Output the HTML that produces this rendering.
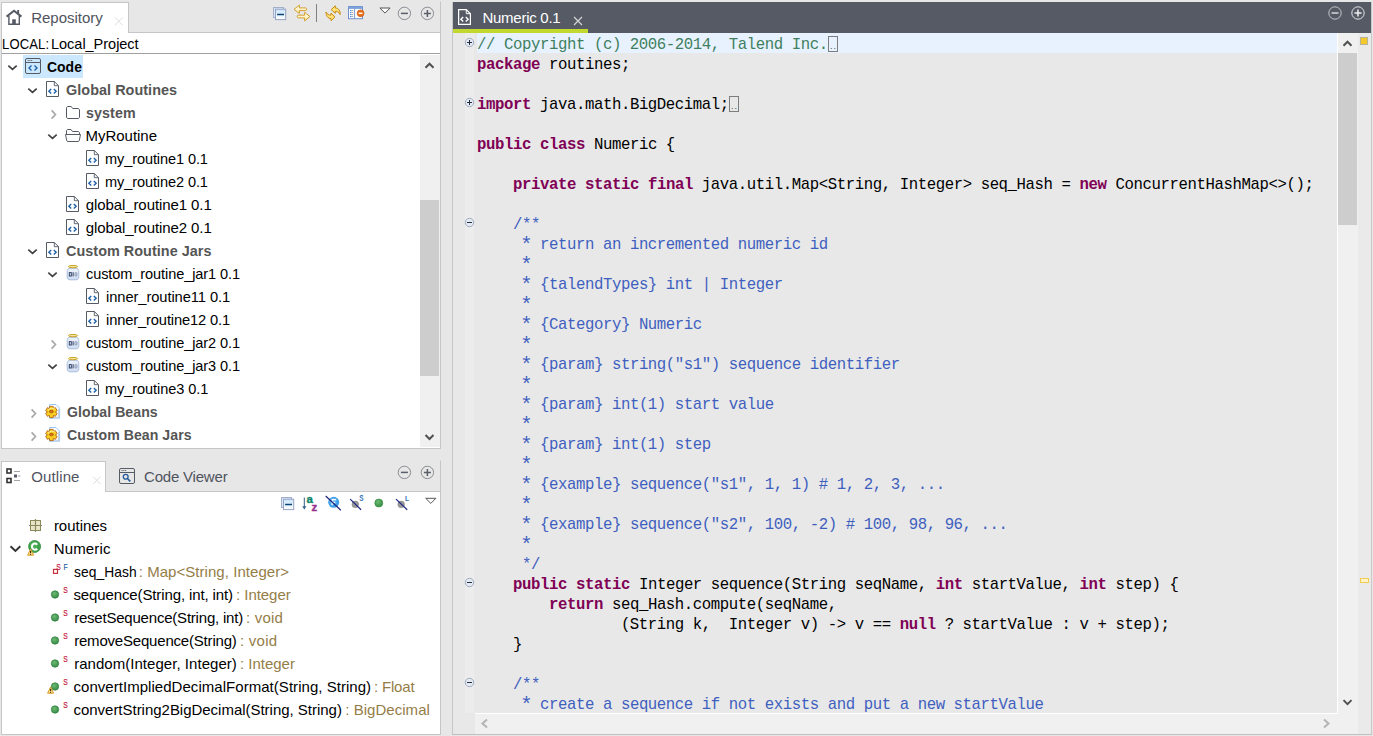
<!DOCTYPE html>
<html lang="en"><head><meta charset="utf-8"><title>Talend Studio - Numeric 0.1</title>
<style>
html,body{margin:0;padding:0}
body{width:1373px;height:736px;background:#e7e7e7;position:relative;overflow:hidden;font-family:"Liberation Sans",sans-serif;font-size:15px;color:#000}
div,span,svg{position:absolute;box-sizing:border-box}
.t{white-space:pre;line-height:23px;height:23px;font-size:15px}
.t span,.c span{position:static}
.b{font-weight:bold}
.g{color:#555}
.tan{color:#957d47}
.c{white-space:pre;font-family:"Liberation Mono",monospace;font-size:15.7px;letter-spacing:-0.4215px;line-height:20px;height:20px;left:478px}
.k{color:#7f0055;font-weight:bold}
.c .as{display:inline-block;width:9px;text-align:center;font-size:20.5px;line-height:10px;letter-spacing:0;vertical-align:-2.4px;text-indent:-1.7px}
.cm{color:#3f7f5f}
.jd{color:#3f5fbf}
</style></head><body>
<!-- Repository view -->
<div style="left:1px;top:1px;width:440px;height:32px;border:1px solid #e3e3e3;border-right-color:#c6c6c6;border-bottom:none;border-top-color:#e7e7e7"></div><div style="left:1px;top:32px;width:440px;height:417px;border:1px solid #c6c6c6;border-top:1px solid #c6c6c6;background:#fff"></div><div style="left:1px;top:2px;width:128px;height:31px;background:#fff;border:1px solid #c6c6c6;border-bottom:none"></div><svg style="left:5px;top:9px" width="18" height="17" viewBox="0 0 18 17"><path d="M1.6 7.6L9 1.8L16.4 7.6" fill="none" stroke="#555a64" stroke-width="2"/><path d="M12.2 1h1.9v4.2l-1.9-1.5Z" fill="#555a64"/><path d="M3.9 7V15.2H14.3V7" fill="none" stroke="#555a64" stroke-width="1.4"/><rect x="7.2" y="10.3" width="3.6" height="4.9" fill="#555a64"/></svg><div class="t" style="left:31.21px;top:6px;letter-spacing:-0.007px;color:#50545e">Repository</div><svg style="left:114px;top:16px" width="11" height="11" viewBox="0 0 11 11"><g transform="translate(0 0.5)"><path d="M1 1L8.6 8.6M8.6 1L1 8.6" stroke="#dedede" stroke-width="1"/></g></svg><svg width="0" height="0" style="left:0;top:0"><defs><linearGradient id="gb" x1="0" y1="0" x2="0" y2="1"><stop offset="0" stop-color="#c9e4fa"/><stop offset="1" stop-color="#ffffff"/></linearGradient><linearGradient id="gy" x1="0" y1="0" x2="0" y2="1"><stop offset="0" stop-color="#fffdf2"/><stop offset="1" stop-color="#ffeaa0"/></linearGradient><radialGradient id="gg" cx="0.4" cy="0.35" r="0.7"><stop offset="0" stop-color="#6cba74"/><stop offset="1" stop-color="#358a44"/></radialGradient><linearGradient id="gj" x1="0" y1="0" x2="0" y2="1"><stop offset="0" stop-color="#eef3fb"/><stop offset="1" stop-color="#cfdcf0"/></linearGradient></defs></svg><svg style="left:273px;top:7px" width="14" height="14" viewBox="0 0 14 14"><rect x="0.5" y="0.5" width="10" height="10" fill="#d7e9fa" stroke="#a3aecb"/><rect x="2.5" y="2.2" width="10.2" height="10.4" fill="url(#gb)" stroke="#98a3c2"/><path d="M4.1 7.5h6.9" stroke="#0b4576" stroke-width="1.5"/></svg><svg style="left:293px;top:4px" width="18" height="18" viewBox="0 0 18 18"><path d="M1 5.3L6.4 1.1V3.9H12.6C13.9 3.9 13.9 6.6 12.6 6.6H6.4V9.5Z" fill="url(#gy)" stroke="#cf9420" stroke-width="0.9" stroke-linejoin="round"/><path d="M17 12.6L11.6 8.3V11.2H5.2C3.9 11.2 3.9 13.9 5.2 13.9H11.6V16.9Z" fill="url(#gy)" stroke="#cf9420" stroke-width="0.9" stroke-linejoin="round"/></svg><div style="left:316px;top:4px;width:1px;height:18px;background:#808080"></div><svg style="left:325px;top:4px" width="17" height="18" viewBox="0 0 17 18"><path d="M6.2 5.6L10.3 1.8V4C13.5 4 15.3 6.5 15.2 10.6C14 8.3 12.5 7.3 10.3 7.3V9.3Z" fill="#ffe27a" stroke="#c98a10" stroke-width="1" stroke-linejoin="round"/><path d="M10 12.9L6 16.7V14.5C2.8 14.5 1 12 1 8C2.2 10.2 3.8 11.2 6 11.2V9.1Z" fill="#ffe27a" stroke="#c98a10" stroke-width="1" stroke-linejoin="round"/></svg><svg style="left:348px;top:6px" width="17" height="14" viewBox="0 0 17 14"><rect x="0.5" y="0.7" width="14" height="12" fill="#fdfeff" stroke="#6d90cf"/><rect x="0.5" y="0.7" width="14" height="1.8" fill="#7aa2de" stroke="#6d90cf" stroke-width="0.6"/><path d="M6.6 2.5V12.7" stroke="#6d90cf" stroke-width="0.9"/><path d="M2 4.6h1.4M2 6.6h1.4M2 8.6h1.4M2 10.6h1.4" stroke="#2e7be0" stroke-width="1"/><path d="M3.6 4.6h1.6M3.6 6.6h1.6M3.6 8.6h1.6M3.6 10.6h1.6" stroke="#9a9a9a" stroke-width="0.9"/><circle cx="12.6" cy="7.3" r="3.4" fill="#e86f1a" stroke="#c9570a" stroke-width="0.7"/><path d="M10.7 7.3h3.8" stroke="#fff" stroke-width="1.4"/></svg><svg style="left:379px;top:7px" width="13" height="8" viewBox="0 0 13 8"><g transform="translate(0 0.2)"><path d="M0.9 0.8H11.1L6 5.9Z" fill="#fff" stroke="#555" stroke-width="1"/></g></svg><svg style="left:396px;top:5px" width="16" height="16" viewBox="0 0 16 16"><g transform="translate(0.9 0.9)"><circle cx="7.5" cy="7.5" r="6.2" fill="none" stroke="#8b8d93" stroke-width="1"/><path d="M4 7.5h7" stroke="#5a5e68" stroke-width="1.5"/></g></svg><svg style="left:419px;top:5px" width="16" height="16" viewBox="0 0 16 16"><g transform="translate(0.9 0.9)"><circle cx="7.5" cy="7.5" r="6.2" fill="none" stroke="#8b8d93" stroke-width="1"/><path d="M4 7.5h7M7.5 4v7" stroke="#5a5e68" stroke-width="1.5"/></g></svg><div class="t" style="left:1.85px;top:32px;letter-spacing:0.145px;transform:scaleX(0.87);transform-origin:0 0;">LOCAL: </div><div class="t" style="left:51.49px;top:32px;letter-spacing:-0.044px;transform:scaleX(0.97);transform-origin:0 0;">Local_Project</div><div style="left:2px;top:53px;width:438px;height:1px;background:#a0a0a0"></div><div style="left:23px;top:55px;width:60px;height:23px;background:#cce8ff"></div><svg style="left:7px;top:64px" width="12" height="8" viewBox="0 0 12 8"><g transform="translate(0 0.5)"><path d="M1.3 1.2 L5.5 4.8 L9.7 1.2" fill="none" stroke="#404040" stroke-width="1.7"/></g></svg><svg style="left:25px;top:58px" width="16" height="16" viewBox="0 0 16 16"><rect x="0.5" y="0.5" width="15" height="15" rx="1.5" fill="none" stroke="#555a64"/><path d="M0.5 4.5H15.5" stroke="#555a64"/><path d="M2.6 2.5h4.6" stroke="#555a64" stroke-width="0.9" stroke-dasharray="1.1 0.65"/><path d="M6.5 7.5L4 10L6.5 12.5M9.5 7.5L12 10L9.5 12.5" fill="none" stroke="#1f62a8" stroke-width="1.4"/></svg><div class="t b" style="left:46.58px;top:55px;letter-spacing:0.013px;transform:scaleX(0.93);transform-origin:0 0;">Code</div>
<svg style="left:27px;top:87px" width="12" height="8" viewBox="0 0 12 8"><g transform="translate(0 0.5)"><path d="M1.3 1.2 L5.5 4.8 L9.7 1.2" fill="none" stroke="#404040" stroke-width="1.7"/></g></svg><svg style="left:46px;top:81px" width="13" height="16" viewBox="0 0 13 16"><path d="M0.5 0.5H8.3L12.5 4.7V15.5H0.5Z" fill="#fff" stroke="#555a64"/><path d="M8.3 0.5V4.7H12.5" fill="none" stroke="#555a64" stroke-width="0.9"/><path d="M5.2 8L2.9 10.2L5.2 12.4M7.8 8L10.1 10.2L7.8 12.4" fill="none" stroke="#1f62a8" stroke-width="1.45"/></svg><div class="t b g" style="left:65.90px;top:78px;letter-spacing:0.050px;transform:scaleX(0.96);transform-origin:0 0;">Global Routines</div>
<svg style="left:50px;top:109px" width="8" height="12" viewBox="0 0 8 12"><g transform="translate(0.5 0)"><path d="M1.1 1.4 L5 5.5 L1.1 9.6" fill="none" stroke="#a6a6a6" stroke-width="1.6"/></g></svg><svg style="left:66px;top:106px" width="14" height="13" viewBox="0 0 14 13"><path d="M0.5 2C0.5 1.2 1.2 0.5 2 0.5H5.2L6.7 2.5H12C12.8 2.5 13.5 3.2 13.5 4V11C13.5 11.8 12.8 12.5 12 12.5H2C1.2 12.5 0.5 11.8 0.5 11Z" fill="#fff" stroke="#555a64"/></svg><div class="t b g" style="left:86.02px;top:101px;letter-spacing:0.106px;transform:scaleX(0.95);transform-origin:0 0;">system</div>
<svg style="left:47px;top:133px" width="12" height="8" viewBox="0 0 12 8"><g transform="translate(0 0.5)"><path d="M1.3 1.2 L5.5 4.8 L9.7 1.2" fill="none" stroke="#404040" stroke-width="1.7"/></g></svg><svg style="left:65px;top:129px" width="16" height="13" viewBox="0 0 16 13"><path d="M1.5 5.5V2C1.5 1.2 2.2 0.5 3 0.5H6L7.5 2.5H13C13.8 2.5 14.5 3.2 14.5 4V5.5" fill="#fff" stroke="#555a64"/><path d="M0.5 5.5H15.5L14.3 11.5C14.2 12.1 13.7 12.5 13 12.5H3C2.3 12.5 1.8 12.1 1.7 11.5Z" fill="#fff" stroke="#555a64"/></svg><div class="t" style="left:85.57px;top:124px;letter-spacing:-0.034px;">MyRoutine</div>
<svg style="left:86px;top:150px" width="13" height="16" viewBox="0 0 13 16"><path d="M0.5 0.5H8.3L12.5 4.7V15.5H0.5Z" fill="#fff" stroke="#555a64"/><path d="M8.3 0.5V4.7H12.5" fill="none" stroke="#555a64" stroke-width="0.9"/><path d="M5.2 8L2.9 10.2L5.2 12.4M7.8 8L10.1 10.2L7.8 12.4" fill="none" stroke="#1f62a8" stroke-width="1.45"/></svg><div class="t" style="left:105.42px;top:147px;letter-spacing:-0.104px;transform:scaleX(0.97);transform-origin:0 0;">my_routine1 0.1</div>
<svg style="left:86px;top:173px" width="13" height="16" viewBox="0 0 13 16"><path d="M0.5 0.5H8.3L12.5 4.7V15.5H0.5Z" fill="#fff" stroke="#555a64"/><path d="M8.3 0.5V4.7H12.5" fill="none" stroke="#555a64" stroke-width="0.9"/><path d="M5.2 8L2.9 10.2L5.2 12.4M7.8 8L10.1 10.2L7.8 12.4" fill="none" stroke="#1f62a8" stroke-width="1.45"/></svg><div class="t" style="left:105.42px;top:170px;letter-spacing:-0.104px;transform:scaleX(0.97);transform-origin:0 0;">my_routine2 0.1</div>
<svg style="left:66px;top:196px" width="13" height="16" viewBox="0 0 13 16"><path d="M0.5 0.5H8.3L12.5 4.7V15.5H0.5Z" fill="#fff" stroke="#555a64"/><path d="M8.3 0.5V4.7H12.5" fill="none" stroke="#555a64" stroke-width="0.9"/><path d="M5.2 8L2.9 10.2L5.2 12.4M7.8 8L10.1 10.2L7.8 12.4" fill="none" stroke="#1f62a8" stroke-width="1.45"/></svg><div class="t" style="left:85.69px;top:193px;letter-spacing:-0.086px;">global_routine1 0.1</div>
<svg style="left:66px;top:219px" width="13" height="16" viewBox="0 0 13 16"><path d="M0.5 0.5H8.3L12.5 4.7V15.5H0.5Z" fill="#fff" stroke="#555a64"/><path d="M8.3 0.5V4.7H12.5" fill="none" stroke="#555a64" stroke-width="0.9"/><path d="M5.2 8L2.9 10.2L5.2 12.4M7.8 8L10.1 10.2L7.8 12.4" fill="none" stroke="#1f62a8" stroke-width="1.45"/></svg><div class="t" style="left:85.69px;top:216px;letter-spacing:-0.086px;">global_routine2 0.1</div>
<svg style="left:27px;top:248px" width="12" height="8" viewBox="0 0 12 8"><g transform="translate(0 0.5)"><path d="M1.3 1.2 L5.5 4.8 L9.7 1.2" fill="none" stroke="#404040" stroke-width="1.7"/></g></svg><svg style="left:46px;top:242px" width="13" height="16" viewBox="0 0 13 16"><path d="M0.5 0.5H8.3L12.5 4.7V15.5H0.5Z" fill="#fff" stroke="#555a64"/><path d="M8.3 0.5V4.7H12.5" fill="none" stroke="#555a64" stroke-width="0.9"/><path d="M5.2 8L2.9 10.2L5.2 12.4M7.8 8L10.1 10.2L7.8 12.4" fill="none" stroke="#1f62a8" stroke-width="1.45"/></svg><div class="t b g" style="left:65.76px;top:239px;letter-spacing:0.036px;transform:scaleX(0.96);transform-origin:0 0;">Custom Routine Jars</div>
<svg style="left:47px;top:271px" width="12" height="8" viewBox="0 0 12 8"><g transform="translate(0 0.5)"><path d="M1.3 1.2 L5.5 4.8 L9.7 1.2" fill="none" stroke="#404040" stroke-width="1.7"/></g></svg><svg style="left:66px;top:264px" width="14" height="17" viewBox="0 0 14 17"><path d="M3 4.3C1.6 5.2 1.2 6.3 1.2 7.6V13C1.2 14.8 2.4 15.8 4 15.8H10C11.6 15.8 12.8 14.8 12.8 13V7.6C12.8 6.3 12.4 5.2 11 4.3Z" fill="url(#gj)" stroke="#a3b8da" stroke-width="0.9"/><ellipse cx="7" cy="2.6" rx="4.6" ry="1.15" fill="#f7eaa6" stroke="#c9a227" stroke-width="1"/><rect x="3.3" y="8.6" width="2" height="3.4" fill="none" stroke="#2f3f66" stroke-width="0.95"/><path d="M7.1 8.2v4.2" stroke="#2f3f66" stroke-width="1"/><rect x="9" y="8.6" width="1.9" height="3.4" rx="0.8" fill="none" stroke="#7d8aa8" stroke-width="0.9"/></svg><div class="t" style="left:85.54px;top:262px;letter-spacing:-0.096px;transform:scaleX(0.97);transform-origin:0 0;">custom_routine_jar1 0.1</div>
<svg style="left:86px;top:288px" width="13" height="16" viewBox="0 0 13 16"><path d="M0.5 0.5H8.3L12.5 4.7V15.5H0.5Z" fill="#fff" stroke="#555a64"/><path d="M8.3 0.5V4.7H12.5" fill="none" stroke="#555a64" stroke-width="0.9"/><path d="M5.2 8L2.9 10.2L5.2 12.4M7.8 8L10.1 10.2L7.8 12.4" fill="none" stroke="#1f62a8" stroke-width="1.45"/></svg><div class="t" style="left:105.56px;top:285px;letter-spacing:-0.078px;transform:scaleX(0.98);transform-origin:0 0;">inner_routine11 0.1</div>
<svg style="left:86px;top:311px" width="13" height="16" viewBox="0 0 13 16"><path d="M0.5 0.5H8.3L12.5 4.7V15.5H0.5Z" fill="#fff" stroke="#555a64"/><path d="M8.3 0.5V4.7H12.5" fill="none" stroke="#555a64" stroke-width="0.9"/><path d="M5.2 8L2.9 10.2L5.2 12.4M7.8 8L10.1 10.2L7.8 12.4" fill="none" stroke="#1f62a8" stroke-width="1.45"/></svg><div class="t" style="left:105.56px;top:308px;letter-spacing:-0.138px;transform:scaleX(0.98);transform-origin:0 0;">inner_routine12 0.1</div>
<svg style="left:50px;top:339px" width="8" height="12" viewBox="0 0 8 12"><g transform="translate(0.5 0)"><path d="M1.1 1.4 L5 5.5 L1.1 9.6" fill="none" stroke="#a6a6a6" stroke-width="1.6"/></g></svg><svg style="left:66px;top:333px" width="14" height="17" viewBox="0 0 14 17"><path d="M3 4.3C1.6 5.2 1.2 6.3 1.2 7.6V13C1.2 14.8 2.4 15.8 4 15.8H10C11.6 15.8 12.8 14.8 12.8 13V7.6C12.8 6.3 12.4 5.2 11 4.3Z" fill="url(#gj)" stroke="#a3b8da" stroke-width="0.9"/><ellipse cx="7" cy="2.6" rx="4.6" ry="1.15" fill="#f7eaa6" stroke="#c9a227" stroke-width="1"/><rect x="3.3" y="8.6" width="2" height="3.4" fill="none" stroke="#2f3f66" stroke-width="0.95"/><path d="M7.1 8.2v4.2" stroke="#2f3f66" stroke-width="1"/><rect x="9" y="8.6" width="1.9" height="3.4" rx="0.8" fill="none" stroke="#7d8aa8" stroke-width="0.9"/></svg><div class="t" style="left:85.54px;top:331px;letter-spacing:-0.096px;transform:scaleX(0.97);transform-origin:0 0;">custom_routine_jar2 0.1</div>
<svg style="left:47px;top:363px" width="12" height="8" viewBox="0 0 12 8"><g transform="translate(0 0.5)"><path d="M1.3 1.2 L5.5 4.8 L9.7 1.2" fill="none" stroke="#404040" stroke-width="1.7"/></g></svg><svg style="left:66px;top:356px" width="14" height="17" viewBox="0 0 14 17"><path d="M3 4.3C1.6 5.2 1.2 6.3 1.2 7.6V13C1.2 14.8 2.4 15.8 4 15.8H10C11.6 15.8 12.8 14.8 12.8 13V7.6C12.8 6.3 12.4 5.2 11 4.3Z" fill="url(#gj)" stroke="#a3b8da" stroke-width="0.9"/><ellipse cx="7" cy="2.6" rx="4.6" ry="1.15" fill="#f7eaa6" stroke="#c9a227" stroke-width="1"/><rect x="3.3" y="8.6" width="2" height="3.4" fill="none" stroke="#2f3f66" stroke-width="0.95"/><path d="M7.1 8.2v4.2" stroke="#2f3f66" stroke-width="1"/><rect x="9" y="8.6" width="1.9" height="3.4" rx="0.8" fill="none" stroke="#7d8aa8" stroke-width="0.9"/></svg><div class="t" style="left:85.54px;top:354px;letter-spacing:-0.096px;transform:scaleX(0.97);transform-origin:0 0;">custom_routine_jar3 0.1</div>
<svg style="left:86px;top:380px" width="13" height="16" viewBox="0 0 13 16"><path d="M0.5 0.5H8.3L12.5 4.7V15.5H0.5Z" fill="#fff" stroke="#555a64"/><path d="M8.3 0.5V4.7H12.5" fill="none" stroke="#555a64" stroke-width="0.9"/><path d="M5.2 8L2.9 10.2L5.2 12.4M7.8 8L10.1 10.2L7.8 12.4" fill="none" stroke="#1f62a8" stroke-width="1.45"/></svg><div class="t" style="left:105.42px;top:377px;letter-spacing:-0.075px;transform:scaleX(0.97);transform-origin:0 0;">my_routine3 0.1</div>
<svg style="left:30px;top:408px" width="8" height="12" viewBox="0 0 8 12"><g transform="translate(0.5 0)"><path d="M1.1 1.4 L5 5.5 L1.1 9.6" fill="none" stroke="#a6a6a6" stroke-width="1.6"/></g></svg><svg style="left:45px;top:403px" width="16" height="17" viewBox="0 0 16 17"><path d="M4.6 1.5H11L14.6 5.1V15.2H4.6Z" fill="#fdfeff" stroke="#8ec3f7" stroke-width="0.9"/><path d="M13.6 6V14.3H8" fill="none" stroke="#c9cdd4" stroke-width="1"/><path d="M4.48 5.49 L4.66 3.36 L8.14 3.36 L8.32 5.49 L8.48 5.58 L10.41 4.67 L12.15 7.69 L10.40 8.91 L10.40 9.09 L12.15 10.31 L10.41 13.33 L8.48 12.42 L8.32 12.51 L8.14 14.64 L4.66 14.64 L4.48 12.51 L4.32 12.42 L2.39 13.33 L0.65 10.31 L2.40 9.09 L2.40 8.91 L0.65 7.69 L2.39 4.67 L4.32 5.58Z" fill="#f9cf1f" stroke="#b5651a" stroke-width="0.9" stroke-linejoin="round"/><path d="M3.2 7.2C4.5 5.2 7.5 4.6 9.6 6" fill="none" stroke="#fff3a0" stroke-width="1.1" opacity="0.9"/><ellipse cx="6.4" cy="8.6" rx="2" ry="1.25" fill="#d8731a" stroke="#a04a08" stroke-width="0.7"/></svg><div class="t b g" style="left:66.57px;top:400px;letter-spacing:0.053px;transform:scaleX(0.94);transform-origin:0 0;">Global Beans</div>
<svg style="left:30px;top:431px" width="8" height="12" viewBox="0 0 8 12"><g transform="translate(0.5 0)"><path d="M1.1 1.4 L5 5.5 L1.1 9.6" fill="none" stroke="#a6a6a6" stroke-width="1.6"/></g></svg><svg style="left:45px;top:426px" width="16" height="17" viewBox="0 0 16 17"><path d="M4.6 1.5H11L14.6 5.1V15.2H4.6Z" fill="#fdfeff" stroke="#8ec3f7" stroke-width="0.9"/><path d="M13.6 6V14.3H8" fill="none" stroke="#c9cdd4" stroke-width="1"/><path d="M4.48 5.49 L4.66 3.36 L8.14 3.36 L8.32 5.49 L8.48 5.58 L10.41 4.67 L12.15 7.69 L10.40 8.91 L10.40 9.09 L12.15 10.31 L10.41 13.33 L8.48 12.42 L8.32 12.51 L8.14 14.64 L4.66 14.64 L4.48 12.51 L4.32 12.42 L2.39 13.33 L0.65 10.31 L2.40 9.09 L2.40 8.91 L0.65 7.69 L2.39 4.67 L4.32 5.58Z" fill="#f9cf1f" stroke="#b5651a" stroke-width="0.9" stroke-linejoin="round"/><path d="M3.2 7.2C4.5 5.2 7.5 4.6 9.6 6" fill="none" stroke="#fff3a0" stroke-width="1.1" opacity="0.9"/><ellipse cx="6.4" cy="8.6" rx="2" ry="1.25" fill="#d8731a" stroke="#a04a08" stroke-width="0.7"/></svg><div class="t b g" style="left:66.57px;top:423px;letter-spacing:0.051px;transform:scaleX(0.94);transform-origin:0 0;">Custom Bean Jars</div>
<div style="left:420px;top:55px;width:20px;height:392px;background:#f0f0f0"></div><div style="left:420px;top:200px;width:19px;height:176px;background:#cdcdcd"></div><svg style="left:424px;top:61px" width="12" height="9" viewBox="0 0 12 9"><g transform="translate(0 0.5)"><path d="M1.5 6.2L5.5 2.2L9.5 6.2" fill="none" stroke="#505050" stroke-width="2"/></g></svg><svg style="left:424px;top:433px" width="12" height="9" viewBox="0 0 12 9"><g transform="translate(0 0.2)"><path d="M1.5 1.8L5.5 5.8L9.5 1.8" fill="none" stroke="#505050" stroke-width="2"/></g></svg>
<!-- Outline view -->
<div style="left:1px;top:460px;width:440px;height:32px;border:1px solid #e3e3e3;border-right-color:#c6c6c6;border-bottom:none;border-top-color:#e7e7e7"></div><div style="left:1px;top:491px;width:440px;height:244px;border:1px solid #c6c6c6;border-top:1px solid #c6c6c6;background:#fff"></div><div style="left:1px;top:461px;width:105px;height:31px;background:#fff;border:1px solid #c6c6c6;border-bottom:none"></div><svg style="left:6px;top:468px" width="16" height="16" viewBox="0 0 16 16"><rect x="1" y="1" width="4" height="4" fill="#fff" stroke="#333" stroke-width="1.6"/><rect x="1" y="10.5" width="4" height="4" fill="#fff" stroke="#333" stroke-width="1.6"/><rect x="8" y="6.5" width="3" height="3" fill="#555a64"/><path d="M8 3.5h6M12 8h2.5M8 12.5h6" stroke="#9a9ca2" stroke-width="0.9"/></svg><div class="t" style="left:31.32px;top:465px;letter-spacing:0.103px;color:#50545e">Outline</div><svg style="left:92px;top:475px" width="11" height="11" viewBox="0 0 11 11"><g transform="translate(0 0.5)"><path d="M1 1L8.6 8.6M8.6 1L1 8.6" stroke="#dedede" stroke-width="1"/></g></svg><svg style="left:119px;top:468px" width="16" height="16" viewBox="0 0 16 16"><rect x="0.5" y="0.5" width="15" height="15" rx="1.5" fill="none" stroke="#555a64"/><path d="M0.5 4.5H15.5" stroke="#555a64"/><path d="M2.6 2.5h4.6" stroke="#555a64" stroke-width="0.9" stroke-dasharray="1.1 0.65"/><circle cx="6.7" cy="8.8" r="2.4" fill="none" stroke="#245a9c" stroke-width="1.3"/><path d="M8.6 10.7L11.3 13.4" stroke="#245a9c" stroke-width="1.6"/></svg><div class="t" style="left:144.03px;top:465px;letter-spacing:-0.200px;color:#50545e">Code Viewer</div><svg style="left:396px;top:464px" width="16" height="16" viewBox="0 0 16 16"><g transform="translate(0.9 0.9)"><circle cx="7.5" cy="7.5" r="6.2" fill="none" stroke="#8b8d93" stroke-width="1"/><path d="M4 7.5h7" stroke="#5a5e68" stroke-width="1.5"/></g></svg><svg style="left:419px;top:464px" width="16" height="16" viewBox="0 0 16 16"><g transform="translate(0.9 0.9)"><circle cx="7.5" cy="7.5" r="6.2" fill="none" stroke="#8b8d93" stroke-width="1"/><path d="M4 7.5h7M7.5 4v7" stroke="#5a5e68" stroke-width="1.5"/></g></svg><svg style="left:281px;top:497px" width="14" height="14" viewBox="0 0 14 14"><rect x="0.5" y="0.5" width="10" height="10" fill="#d7e9fa" stroke="#a3aecb"/><rect x="2.5" y="2.2" width="10.2" height="10.4" fill="url(#gb)" stroke="#98a3c2"/><path d="M4.1 7.5h6.9" stroke="#0b4576" stroke-width="1.5"/></svg><svg style="left:301px;top:494px" width="19" height="19" viewBox="0 0 19 19"><path d="M3.3 3.5V14" stroke="#2f5f8a" stroke-width="1"/><path d="M1.3 12.2L3.3 15.6L5.3 12.2Z" fill="#2f5f8a"/><text x="5.4" y="8.9" font-family="Liberation Sans,sans-serif" font-weight="bold" font-size="11.5" fill="#0d8468" stroke="#0d8468" stroke-width="0.35">a</text><text x="10.6" y="16.9" font-family="Liberation Sans,sans-serif" font-weight="bold" font-size="11.5" fill="#96308f" stroke="#96308f" stroke-width="0.35">z</text></svg><svg style="left:324px;top:494px" width="19" height="19" viewBox="0 0 19 19"><circle cx="9.7" cy="8.3" r="5.5" fill="#3f9fe6"/><circle cx="9" cy="7.4" r="3.6" fill="#5fb2f0"/><path d="M8 5.6h4.2M8.2 5.6v5.6M8.2 8.3h3" stroke="#fff" stroke-width="1.3" fill="none"/><path d="M1.7 2L16.8 16.3" stroke="#1a237e" stroke-width="1.2"/></svg><svg style="left:349px;top:494px" width="16" height="17" viewBox="0 0 16 17"><circle cx="6.3" cy="10.4" r="3.3" fill="#9a9a9a" stroke="#858585" stroke-width="0.6"/><path d="M1.2 5.1L12 15.7" stroke="#1a237e" stroke-width="1.2"/><text transform="translate(10.2 7.4) scale(0.78 1)" font-family="Liberation Sans,sans-serif" font-weight="bold" font-size="8.2" fill="#2f6fb5">S</text></svg><svg style="left:374px;top:498px" width="10" height="10" viewBox="0 0 10 10"><circle cx="4.8" cy="5" r="4" fill="url(#gg)" stroke="#3b8c3f" stroke-width="0.7"/></svg><svg style="left:395px;top:494px" width="16" height="17" viewBox="0 0 16 17"><circle cx="6.2" cy="10.4" r="3.3" fill="#9a9a9a" stroke="#858585" stroke-width="0.6"/><path d="M1 5.1L12.2 15.7" stroke="#1a237e" stroke-width="1.2"/><text transform="translate(10 7.4) scale(0.85 1)" font-family="Liberation Sans,sans-serif" font-weight="bold" font-size="8" fill="#2f6fb5">L</text></svg><svg style="left:424px;top:497px" width="13" height="8" viewBox="0 0 13 8"><g transform="translate(0.8 0.5)"><path d="M0.9 0.8H11.1L6 5.9Z" fill="#fff" stroke="#555" stroke-width="1"/></g></svg><svg style="left:29px;top:519px" width="13" height="13" viewBox="0 0 13 13"><rect x="1.5" y="1.5" width="10" height="10" fill="#e8e4c8" stroke="#8b8a5c"/><path d="M6.5 0V13M0 6.5H13" stroke="#8b8a5c" stroke-width="1.2"/></svg><div class="t blk" style="left:53.90px;top:514px;letter-spacing:-0.024px;">routines</div>
<svg style="left:8px;top:544px" width="14" height="10" viewBox="0 0 14 10"><g transform="translate(0.9 0.7)"><path d="M1.6 1.6 L6.5 6.3 L11.4 1.6" fill="none" stroke="#333" stroke-width="1.9"/></g></svg><svg style="left:26px;top:540px" width="17" height="16" viewBox="0 0 17 16"><circle cx="8.6" cy="6.5" r="6" fill="#3fa24c" stroke="#2f8a3c" stroke-width="0.8"/><circle cx="7.8" cy="5.4" r="3.8" fill="#56b463" opacity="0.6"/><path d="M11.3 4.6C9 2.4 5.9 3.9 5.9 6.6C5.9 9.3 9 10.8 11.3 8.7" fill="none" stroke="#fff" stroke-width="2"/></svg><svg style="left:27px;top:548px" width="8" height="9" viewBox="0 0 8 9"><path d="M3.6 1L6.6 7.2H0.6Z" fill="#fde08a" stroke="#d89a2a" stroke-width="1" stroke-linejoin="round"/><path d="M3.6 2.9v2.4M3.6 6v0.8" stroke="#2a1c00" stroke-width="1"/></svg><div class="t blk" style="left:53.72px;top:537px;letter-spacing:0.137px;">Numeric</div>
<svg style="left:52px;top:568px" width="7" height="7" viewBox="0 0 7 7"><g transform="translate(0.7 0.6)"><rect x="0.8" y="0.8" width="4" height="4" fill="#fff" stroke="#c8323c" stroke-width="1.2"/></g></svg><svg style="left:55px;top:561px" width="9" height="11" viewBox="0 0 9 11"><g transform="translate(0.8 0.7)"><text transform="translate(0.55 8.2) scale(0.68 1)" font-family="Liberation Sans,sans-serif" font-size="9.9" fill="#c4203c" stroke="#c4203c" stroke-width="0.2">S</text></g></svg><svg style="left:63px;top:561px" width="9" height="11" viewBox="0 0 9 11"><g transform="translate(0 0.7)"><text transform="translate(0.55 8.2) scale(0.68 1)" font-family="Liberation Sans,sans-serif" font-size="9.9" fill="#1f5fa0" stroke="#1f5fa0" stroke-width="0.2">F</text></g></svg><div class="t blk" style="left:73.53px;top:560px;letter-spacing:0.081px;transform:scaleX(0.92);transform-origin:0 0;">seq_Hash</div><div class="t tan" style="left:138.72px;top:560px;letter-spacing:0.048px;">: Map&lt;String, Integer&gt;</div>
<svg style="left:50px;top:590px" width="10" height="10" viewBox="0 0 10 10"><g transform="translate(0.5 0)"><circle cx="4.5" cy="4.5" r="3.7" fill="url(#gg)" stroke="#2f7d3c" stroke-width="0.7"/></g></svg><svg style="left:62px;top:584px" width="9" height="11" viewBox="0 0 9 11"><g transform="translate(0.7 0.9)"><text transform="translate(0.55 8.2) scale(0.68 1)" font-family="Liberation Sans,sans-serif" font-size="9.9" fill="#c4203c" stroke="#c4203c" stroke-width="0.2">S</text></g></svg><div class="t blk" style="left:73.38px;top:583px;letter-spacing:-0.114px;">sequence(String, int, int)</div><div class="t tan" style="left:235.99px;top:583px;letter-spacing:-0.037px;">: Integer</div>
<svg style="left:50px;top:613px" width="10" height="10" viewBox="0 0 10 10"><g transform="translate(0.5 0)"><circle cx="4.5" cy="4.5" r="3.7" fill="url(#gg)" stroke="#2f7d3c" stroke-width="0.7"/></g></svg><svg style="left:62px;top:607px" width="9" height="11" viewBox="0 0 9 11"><g transform="translate(0.7 0.9)"><text transform="translate(0.55 8.2) scale(0.68 1)" font-family="Liberation Sans,sans-serif" font-size="9.9" fill="#c4203c" stroke="#c4203c" stroke-width="0.2">S</text></g></svg><div class="t blk" style="left:74.13px;top:606px;letter-spacing:-0.210px;">resetSequence(String, int)</div><div class="t tan" style="left:245.99px;top:606px;letter-spacing:0.200px;">: void</div>
<svg style="left:50px;top:636px" width="10" height="10" viewBox="0 0 10 10"><g transform="translate(0.5 0)"><circle cx="4.5" cy="4.5" r="3.7" fill="url(#gg)" stroke="#2f7d3c" stroke-width="0.7"/></g></svg><svg style="left:62px;top:630px" width="9" height="11" viewBox="0 0 9 11"><g transform="translate(0.7 0.9)"><text transform="translate(0.55 8.2) scale(0.68 1)" font-family="Liberation Sans,sans-serif" font-size="9.9" fill="#c4203c" stroke="#c4203c" stroke-width="0.2">S</text></g></svg><div class="t blk" style="left:74.13px;top:629px;letter-spacing:-0.193px;">removeSequence(String)</div><div class="t tan" style="left:239.99px;top:629px;letter-spacing:0.247px;">: void</div>
<svg style="left:50px;top:659px" width="10" height="10" viewBox="0 0 10 10"><g transform="translate(0.5 0)"><circle cx="4.5" cy="4.5" r="3.7" fill="url(#gg)" stroke="#2f7d3c" stroke-width="0.7"/></g></svg><svg style="left:62px;top:653px" width="9" height="11" viewBox="0 0 9 11"><g transform="translate(0.7 0.9)"><text transform="translate(0.55 8.2) scale(0.68 1)" font-family="Liberation Sans,sans-serif" font-size="9.9" fill="#c4203c" stroke="#c4203c" stroke-width="0.2">S</text></g></svg><div class="t blk" style="left:74.13px;top:652px;letter-spacing:0.041px;">random(Integer, Integer)</div><div class="t tan" style="left:239.99px;top:652px;letter-spacing:-0.012px;">: Integer</div>
<svg style="left:50px;top:682px" width="10" height="10" viewBox="0 0 10 10"><g transform="translate(0.5 0)"><circle cx="4.5" cy="4.5" r="3.7" fill="url(#gg)" stroke="#2f7d3c" stroke-width="0.7"/></g></svg><svg style="left:47px;top:686px" width="8" height="9" viewBox="0 0 8 9"><path d="M3.6 1L6.6 7.2H0.6Z" fill="#fde08a" stroke="#d89a2a" stroke-width="1" stroke-linejoin="round"/><path d="M3.6 2.9v2.4M3.6 6v0.8" stroke="#2a1c00" stroke-width="1"/></svg><svg style="left:62px;top:676px" width="9" height="11" viewBox="0 0 9 11"><g transform="translate(0.7 0.9)"><text transform="translate(0.55 8.2) scale(0.68 1)" font-family="Liberation Sans,sans-serif" font-size="9.9" fill="#c4203c" stroke="#c4203c" stroke-width="0.2">S</text></g></svg><div class="t blk" style="left:73.47px;top:675px;letter-spacing:0.041px;">convertImpliedDecimalFormat(String, String)</div><div class="t tan" style="left:373.99px;top:675px;letter-spacing:-0.187px;">: Float</div>
<svg style="left:50px;top:705px" width="10" height="10" viewBox="0 0 10 10"><g transform="translate(0.5 0)"><circle cx="4.5" cy="4.5" r="3.7" fill="url(#gg)" stroke="#2f7d3c" stroke-width="0.7"/></g></svg><svg style="left:62px;top:699px" width="9" height="11" viewBox="0 0 9 11"><g transform="translate(0.7 0.9)"><text transform="translate(0.55 8.2) scale(0.68 1)" font-family="Liberation Sans,sans-serif" font-size="9.9" fill="#c4203c" stroke="#c4203c" stroke-width="0.2">S</text></g></svg><div class="t blk" style="left:73.47px;top:698px;letter-spacing:-0.022px;">convertString2BigDecimal(String, String)</div><div class="t tan" style="left:345.31px;top:698px;letter-spacing:0.032px;">: BigDecimal</div>

<!-- Editor -->
<div style="left:453px;top:2px;width:918px;height:31px;background:#555a64"></div><div style="left:453px;top:29px;width:135px;height:4px;background:#c3d82e"></div><svg style="left:458px;top:9px" width="13" height="16" viewBox="0 0 13 16"><path d="M0.6 0.6H8.3L12.4 4.7V15.4H0.6Z" fill="none" stroke="#fff" stroke-width="1.25"/><path d="M8.3 0.6V4.7H12.4" fill="none" stroke="#fff" stroke-width="1"/><path d="M5.2 8L2.9 10.2L5.2 12.4M7.8 8L10.1 10.2L7.8 12.4" fill="none" stroke="#fff" stroke-width="1.4"/></svg><div class="t" style="left:482.47px;top:6px;letter-spacing:-0.267px;color:#fff">Numeric 0.1</div><svg style="left:573px;top:16px" width="10" height="10" viewBox="0 0 10 10"><path d="M1 1L9 9M9 1L1 9" stroke="#d8d8d8" stroke-width="1.1"/></svg><svg style="left:1327px;top:5px" width="16" height="16" viewBox="0 0 16 16"><g transform="translate(0.5 0.5)"><circle cx="7.5" cy="7.5" r="6.2" fill="none" stroke="#c4c6ca" stroke-width="1"/><path d="M4 7.5h7" stroke="#d6d8dc" stroke-width="1.5"/></g></svg><svg style="left:1350px;top:5px" width="16" height="16" viewBox="0 0 16 16"><g transform="translate(0.5 0.5)"><circle cx="7.5" cy="7.5" r="6.2" fill="none" stroke="#e0e2e6" stroke-width="1"/><path d="M4 7.5h7M7.5 4v7" stroke="#f0f0f0" stroke-width="1.5"/></g></svg><div style="left:453px;top:33px;width:918px;height:701px;background:#e8e8e8"></div><div style="left:465px;top:33px;width:9px;height:680px;background:#ececec"></div><div style="left:477px;top:33px;width:860px;height:20px;background:#e8f2fe"></div><div style="left:453px;top:33px;width:884px;height:680px;overflow:hidden"><div class="c" style="left:24px;top:2px"><span class="cm">// Copyright (c) 2006-2014, Talend Inc.</span></div>
<div class="c" style="left:24px;top:22px"><span class="k">package</span> routines;</div>
<div class="c" style="left:24px;top:62px"><span class="k">import</span> java.math.BigDecimal;</div>
<div class="c" style="left:24px;top:102px"><span class="k">public</span> <span class="k">class</span> Numeric {</div>
<div class="c" style="left:24px;top:142px">    <span class="k">private</span> <span class="k">static</span> <span class="k">final</span> java.util.Map&lt;String, Integer&gt; seq_Hash = <span class="k">new</span> ConcurrentHashMap&lt;&gt;();</div>
<div class="c jd" style="left:24px;top:182px">    /**</div>
<div class="c jd" style="left:24px;top:202px">     <span class="as">*</span> return an incremented numeric id</div>
<div class="c jd" style="left:24px;top:222px">     <span class="as">*</span></div>
<div class="c jd" style="left:24px;top:242px">     <span class="as">*</span> {talendTypes} int | Integer</div>
<div class="c jd" style="left:24px;top:262px">     <span class="as">*</span></div>
<div class="c jd" style="left:24px;top:282px">     <span class="as">*</span> {Category} Numeric</div>
<div class="c jd" style="left:24px;top:302px">     <span class="as">*</span></div>
<div class="c jd" style="left:24px;top:322px">     <span class="as">*</span> {param} string("s1") sequence identifier</div>
<div class="c jd" style="left:24px;top:342px">     <span class="as">*</span></div>
<div class="c jd" style="left:24px;top:362px">     <span class="as">*</span> {param} int(1) start value</div>
<div class="c jd" style="left:24px;top:382px">     <span class="as">*</span></div>
<div class="c jd" style="left:24px;top:402px">     <span class="as">*</span> {param} int(1) step</div>
<div class="c jd" style="left:24px;top:422px">     <span class="as">*</span></div>
<div class="c jd" style="left:24px;top:442px">     <span class="as">*</span> {example} sequence("s1", 1, 1) # 1, 2, 3, ...</div>
<div class="c jd" style="left:24px;top:462px">     <span class="as">*</span></div>
<div class="c jd" style="left:24px;top:482px">     <span class="as">*</span> {example} sequence("s2", 100, -2) # 100, 98, 96, ...</div>
<div class="c jd" style="left:24px;top:502px">     <span class="as">*</span></div>
<div class="c jd" style="left:24px;top:522px">     */</div>
<div class="c" style="left:24px;top:542px">    <span class="k">public</span> <span class="k">static</span> Integer sequence(String seqName, <span class="k">int</span> startValue, <span class="k">int</span> step) {</div>
<div class="c" style="left:24px;top:562px">        <span class="k">return</span> seq_Hash.compute(seqName,</div>
<div class="c" style="left:24px;top:582px">                (String k,  Integer v) -&gt; v == <span class="k">null</span> ? startValue : v + step);</div>
<div class="c" style="left:24px;top:602px">    }</div>
<div class="c jd" style="left:24px;top:642px">    /**</div>
<div class="c jd" style="left:24px;top:662px">     <span class="as">*</span> create a sequence if not exists and put a new startValue</div>
</div><div style="left:828px;top:36px;width:10px;height:16px;border:1px solid #7d7d7d"></div><div style="left:830px;top:43px;width:8px;height:6px;font-family:'Liberation Sans',sans-serif;font-size:9px;line-height:6px;letter-spacing:1.1px;color:#4a4a4a;white-space:pre">..</div><div style="left:729px;top:96px;width:10px;height:16px;border:1px solid #7d7d7d"></div><div style="left:731px;top:103px;width:8px;height:6px;font-family:'Liberation Sans',sans-serif;font-size:9px;line-height:6px;letter-spacing:1.1px;color:#4a4a4a;white-space:pre">..</div><svg style="left:464px;top:37px" width="11" height="11" viewBox="0 0 11 11"><g transform="translate(0.5 0.5)"><circle cx="5" cy="5" r="4.2" fill="#e6ebf3" stroke="#9eabc0" stroke-width="1"/><path d="M2.5 5h5" stroke="#222c3e" stroke-width="1"/><path d="M5 2.5v5" stroke="#222c3e" stroke-width="1"/></g></svg><svg style="left:464px;top:97px" width="11" height="11" viewBox="0 0 11 11"><g transform="translate(0.5 0.5)"><circle cx="5" cy="5" r="4.2" fill="#e6ebf3" stroke="#9eabc0" stroke-width="1"/><path d="M2.5 5h5" stroke="#222c3e" stroke-width="1"/><path d="M5 2.5v5" stroke="#222c3e" stroke-width="1"/></g></svg><svg style="left:464px;top:217px" width="11" height="11" viewBox="0 0 11 11"><g transform="translate(0.5 0.5)"><circle cx="5" cy="5" r="4.2" fill="#e6ebf3" stroke="#9eabc0" stroke-width="1"/><path d="M2.5 5h5" stroke="#222c3e" stroke-width="1"/></g></svg><svg style="left:464px;top:577px" width="11" height="11" viewBox="0 0 11 11"><g transform="translate(0.5 0.5)"><circle cx="5" cy="5" r="4.2" fill="#e6ebf3" stroke="#9eabc0" stroke-width="1"/><path d="M2.5 5h5" stroke="#222c3e" stroke-width="1"/></g></svg><svg style="left:464px;top:677px" width="11" height="11" viewBox="0 0 11 11"><g transform="translate(0.5 0.5)"><circle cx="5" cy="5" r="4.2" fill="#e6ebf3" stroke="#9eabc0" stroke-width="1"/><path d="M2.5 5h5" stroke="#222c3e" stroke-width="1"/></g></svg><div style="left:1337px;top:33px;width:1px;height:681px;background:#fff"></div><div style="left:475px;top:713px;width:863px;height:1px;background:#fff"></div><div style="left:1338px;top:33px;width:20px;height:701px;background:#f0f0f0"></div><div style="left:1338px;top:53px;width:19px;height:172px;background:#cdcdcd"></div><svg style="left:1342px;top:39px" width="12" height="9" viewBox="0 0 12 9"><g transform="translate(0 0.5)"><path d="M1.5 6.2L5.5 2.2L9.5 6.2" fill="none" stroke="#505050" stroke-width="2"/></g></svg><svg style="left:1342px;top:698px" width="12" height="9" viewBox="0 0 12 9"><g transform="translate(0 0.3)"><path d="M1.5 1.8L5.5 5.8L9.5 1.8" fill="none" stroke="#505050" stroke-width="2"/></g></svg><div style="left:475px;top:714px;width:863px;height:20px;background:#f0f0f0"></div><svg style="left:480px;top:718px" width="9" height="12" viewBox="0 0 9 12"><g transform="translate(0.5 0)"><path d="M6.5 1.5L2 5.5L6.5 9.5" fill="none" stroke="#b4b4b4" stroke-width="2"/></g></svg><svg style="left:1322px;top:718px" width="9" height="12" viewBox="0 0 9 12"><g transform="translate(0.5 0)"><path d="M1.5 1.5L6 5.5L1.5 9.5" fill="none" stroke="#b4b4b4" stroke-width="2"/></g></svg><div style="left:1358px;top:33px;width:13px;height:701px;background:#eaeaea"></div><div style="left:1360px;top:37px;width:8px;height:8px;background:#f5c92c;border:1px solid #b9b29a"></div><div style="left:1360px;top:578px;width:9px;height:5px;background:#fff3c9;border:1px solid #f3cc4c"></div><div style="left:452px;top:2px;width:1px;height:733px;background:#c6c6c6"></div><div style="left:1371px;top:2px;width:1px;height:733px;background:#c8c8c8"></div><div style="left:452px;top:734px;width:920px;height:1px;background:#c0c0c0"></div>
</body></html>
